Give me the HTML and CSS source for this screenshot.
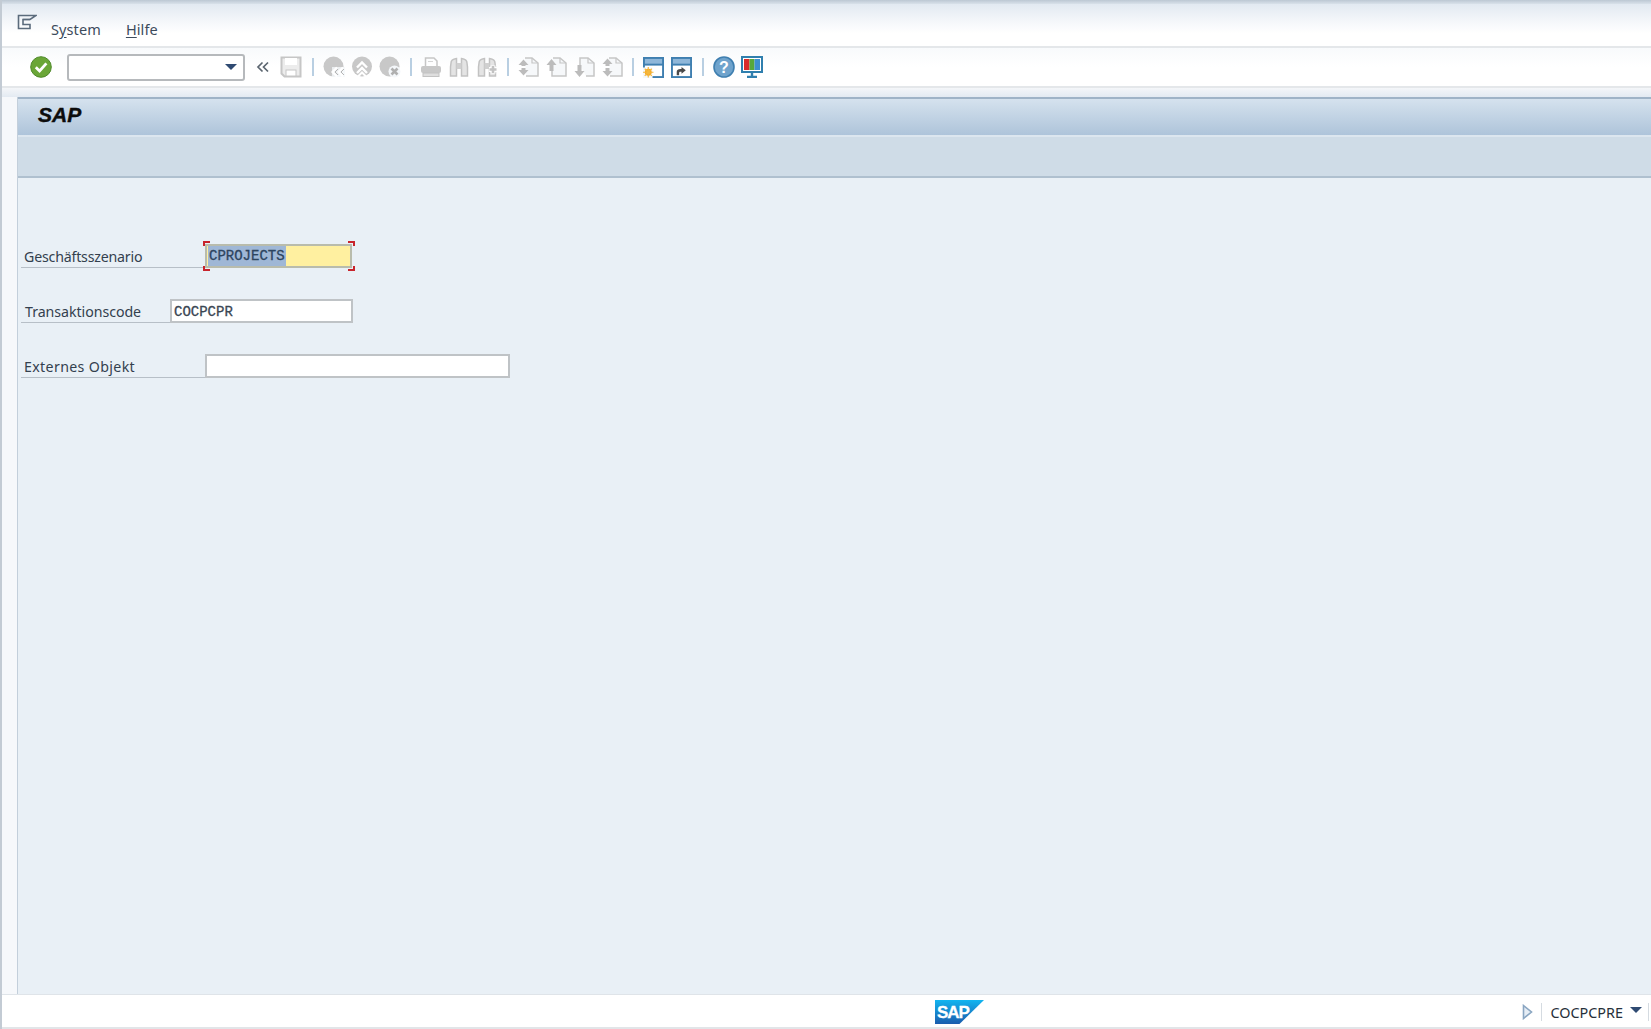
FILE: index.html
```html
<!DOCTYPE html>
<html lang="de">
<head>
<meta charset="utf-8">
<title>SAP</title>
<link rel="stylesheet" href="styles.css">
</head>
<body>
<div class="app">
  <div class="topline"></div>
  <header class="menubar">
    <svg class="menu-icon" viewBox="0 0 20 16" width="20" height="16"><path d="M1.5 1.5H19L13 5.5H6V10.5H13V14.5H1.5Z" fill="none" stroke="#5b6b7c" stroke-width="1.6"/><path d="M6 5.5H13" stroke="#5b6b7c" stroke-width="1.4"/></svg>
    <span class="menu-item">S<u>y</u>stem</span>
    <span class="menu-item"><u>H</u>ilfe</span>
  </header>
  <nav class="toolbar">
    <span class="slot">
      <svg viewBox="0 0 22 22" width="22" height="22"><circle cx="11" cy="11" r="10.3" fill="#6aa637"/><circle cx="11" cy="11" r="10.3" fill="none" stroke="#4f8a2a" stroke-width="1"/><path d="M5.8 11.2L9.6 15L16.4 7.4" fill="none" stroke="#fff" stroke-width="2.8"/></svg>
    </span>
    <div class="combo"><span class="combo-arrow"></span></div>
    <span class="slot">
      <svg viewBox="0 0 14 12" width="14" height="12"><path d="M6.5 1.5L2 6L6.5 10.5M12 1.5L7.5 6L12 10.5" fill="none" stroke="#5c6670" stroke-width="1.7"/></svg>
    </span>
    <span class="slot">
      <svg viewBox="0 0 22 22" width="22" height="22"><path d="M1.5 1.5H20.5V20.5H4.5L1.5 17.5Z" fill="#ececec" stroke="#c6c6c6" stroke-width="2"/><rect x="5" y="2" width="12" height="7" fill="#fff"/><rect x="6" y="14" width="10" height="6" fill="#fff" stroke="#c6c6c6"/></svg>
    </span>
    <span class="sep sep-first"></span>
    <span class="slot">
      <svg viewBox="0 0 22 22" width="22" height="22"><circle cx="10.5" cy="10.5" r="10" fill="#c8c8c8"/><rect x="9" y="11" width="13" height="10" fill="#f4f7fa" opacity=".8"/><path d="M14 11.5L9.5 16L14 20.5M20 11.5L15.5 16L20 20.5" fill="none" stroke="#fff" stroke-width="2.2"/><path d="M15 13L12 16L15 19M21 13L18 16L21 19" fill="none" stroke="#b5b5b5" stroke-width="1"/></svg>
    </span>
    <span class="slot">
      <svg viewBox="0 0 22 22" width="22" height="22"><circle cx="11" cy="10.5" r="10" fill="#c8c8c8"/><path d="M6 11.5L11 6.5L16 11.5M6 17L11 12L16 17" fill="none" stroke="#fff" stroke-width="2.4"/><path d="M7 20.5L11 16.5L15 20.5" fill="none" stroke="#fff" stroke-width="2"/></svg>
    </span>
    <span class="slot">
      <svg viewBox="0 0 22 22" width="22" height="22"><circle cx="10.5" cy="10.5" r="10" fill="#c8c8c8"/><circle cx="15.5" cy="15.5" r="6" fill="#f4f7fa"/><path d="M12.5 12.5L18.5 18.5M18.5 12.5L12.5 18.5" stroke="#b0b0b0" stroke-width="2.6"/></svg>
    </span>
    <span class="sep sep-tight"></span>
    <span class="slot">
      <svg viewBox="0 0 22 22" width="22" height="22"><path d="M5.5 10V2H14L17 5V10" fill="none" stroke="#c6c6c6" stroke-width="1.5"/><path d="M8 5.5H13" stroke="#d5d5d5"/><rect x="1" y="10" width="20" height="7" rx="2" fill="#c8c8c8"/><rect x="3" y="17" width="16" height="3.5" fill="#dedede" stroke="#c2c2c2"/></svg>
    </span>
    <span class="slot">
      <svg viewBox="0 0 22 22" width="22" height="22"><path d="M3 7C3 4 5 3 8.5 2.5V20H2.5V11ZM19 7C19 4 17 3 13.5 2.5V20H19.5V11Z" fill="#e4e4e4" stroke="#c2c2c2" stroke-width="1.5"/><rect x="8.5" y="7" width="5" height="6" fill="#d0d0d0"/></svg>
    </span>
    <span class="slot">
      <svg viewBox="0 0 22 22" width="22" height="22"><path d="M3 7C3 4 5 3 8.5 2.5V20H2.5V11ZM19 7C19 4 17 3 13.5 2.5V20H19.5V11Z" fill="#e4e4e4" stroke="#c2c2c2" stroke-width="1.5"/><rect x="8.5" y="7" width="5" height="6" fill="#d0d0d0"/><path d="M13 13.5H21M17 9.5V17.5" stroke="#fff" stroke-width="5"/><path d="M13.5 13.5H20.5M17 10V17" stroke="#c2c2c2" stroke-width="2.6"/></svg>
    </span>
    <span class="sep sep-tight"></span>
    <span class="slot">
      <svg viewBox="0 0 22 22" width="22" height="22"><path d="M8 2H15L21 7V20H9" fill="#f6f8fa" stroke="#c6c6c6" stroke-width="1.5"/><path d="M15 2V7H21" fill="none" stroke="#c6c6c6" stroke-width="1.2"/><path d="M1.5 9L6.5 3.5L11.5 9H8.5V10H4.5V9ZM1.5 14L6.5 19.5L11.5 14H8.5V12H4.5V14Z" fill="#bcbcbc"/></svg>
    </span>
    <span class="slot">
      <svg viewBox="0 0 22 22" width="22" height="22"><path d="M8 2H15L21 7V20H7V14" fill="#f6f8fa" stroke="#c6c6c6" stroke-width="1.5"/><path d="M15 2V7H21" fill="none" stroke="#c6c6c6" stroke-width="1.2"/><path d="M1.5 9L6.5 3L11.5 9H8.5V15H4.5V9Z" fill="#bcbcbc"/></svg>
    </span>
    <span class="slot">
      <svg viewBox="0 0 22 22" width="22" height="22"><path d="M7 9V2H15L21 7V20H13" fill="#f6f8fa" stroke="#c6c6c6" stroke-width="1.5"/><path d="M15 2V7H21" fill="none" stroke="#c6c6c6" stroke-width="1.2"/><path d="M1.5 15L6.5 21L11.5 15H8.5V9H4.5V15Z" fill="#bcbcbc"/></svg>
    </span>
    <span class="slot">
      <svg viewBox="0 0 22 22" width="22" height="22"><path d="M8 2H15L21 7V20H9" fill="#f6f8fa" stroke="#c6c6c6" stroke-width="1.5"/><path d="M15 2V7H21" fill="none" stroke="#c6c6c6" stroke-width="1.2"/><path d="M1.5 8L6.5 2.5L11.5 8H8.5V10H4.5V8ZM1.5 15L6.5 20.5L11.5 15H8.5V12H4.5V15Z" fill="#bcbcbc"/></svg>
    </span>
    <span class="sep sep-tight"></span>
    <span class="slot">
      <svg viewBox="0 0 22 22" width="21" height="21"><rect x="1" y="1" width="20" height="20" fill="#fff" stroke="#3f7fb0" stroke-width="2"/><rect x="1" y="1" width="20" height="7" fill="#8fb7d9" stroke="#3f7fb0" stroke-width="2"/><rect x="0" y="11" width="10" height="11" fill="#f4f8fb"/><circle cx="5.5" cy="16" r="3.6" fill="#f5a623"/><path d="M5.5 10.5V21.5M0 16H11M1.8 12.3L9.2 19.7M9.2 12.3L1.8 19.7" stroke="#f5b83d" stroke-width="1.2"/></svg>
    </span>
    <span class="slot">
      <svg viewBox="0 0 22 22" width="21" height="21"><rect x="1" y="1" width="20" height="20" fill="#fff" stroke="#3f7fb0" stroke-width="2"/><rect x="1" y="1" width="20" height="7" fill="#8fb7d9" stroke="#3f7fb0" stroke-width="2"/><path d="M6 19V15.5C6 13.5 7.5 12.5 10 12.5H11V10.5L15.5 14L11 17.5V15.5H10C9 15.5 8.5 16 8.5 17V19Z" fill="#4a4a4a"/></svg>
    </span>
    <span class="sep sep-first"></span>
    <span class="slot">
      <svg viewBox="0 0 22 22" width="22" height="22"><circle cx="11" cy="11" r="10" fill="#6fa3cc" stroke="#3f7fb0" stroke-width="1.6"/><text x="11" y="16.5" class="help-mark">?</text></svg>
    </span>
    <span class="slot">
      <svg viewBox="0 0 22 22" width="22" height="22"><rect x="1" y="1" width="20" height="15" fill="#fff" stroke="#2f7fae" stroke-width="2"/><rect x="3" y="3" width="5.5" height="11" fill="#d92b2b"/><rect x="8.5" y="3" width="5" height="11" fill="#57a83c"/><rect x="13.5" y="3" width="5.5" height="11" fill="#3d8fd1"/><path d="M11 16V20M6 21H16" stroke="#2f7fae" stroke-width="2.4"/></svg>
    </span>
  </nav>
  <div class="gap-band"></div>
  <main class="panel">
    <div class="title-bar"><h1 class="title">SAP</h1></div>
    <div class="app-toolbar"></div>
    <section class="form">
      <div class="row">
        <label class="label label-wide">Geschäftsszenario</label>
        <div class="focus-wrap">
          <div class="field field-focus"><span class="selected">CPROJECTS</span></div>
          <i class="corner corner-tl"></i><i class="corner corner-tr"></i><i class="corner corner-bl"></i><i class="corner corner-br"></i>
        </div>
      </div>
      <div class="row">
        <label class="label label-narrow">Transaktionscode</label>
        <div class="field field-code">COCPCPR</div>
      </div>
      <div class="row">
        <label class="label label-wide-full">Externes Objekt</label>
        <div class="field field-long"></div>
      </div>
    </section>
  </main>
  <footer class="statusbar">
    <div class="status-logo">
      <svg viewBox="0 0 49 24" width="49" height="24"><defs><linearGradient id="sapg" x1="0" y1="0" x2="0" y2="1"><stop offset="0" stop-color="#12b5f0"/><stop offset="1" stop-color="#1a5cad"/></linearGradient></defs><path d="M0 0H49L24.5 24H0Z" fill="url(#sapg)"/><text x="2" y="18" class="logo-mark">SAP</text></svg>
    </div>
    <div class="status-right">
      <svg viewBox="0 0 11 16" width="11" height="16"><path d="M1.5 1.5L9.5 8L1.5 14.5Z" fill="#e5edf5" stroke="#8aa6c2" stroke-width="1.6"/></svg>
      <span class="status-sep"></span>
      <span class="status-text">COCPCPRE</span>
      <span class="status-arrow"></span>
      <span class="status-sep status-sep-end"></span>
    </div>
  </footer>
</div>
</body>
</html>
```
FILE: styles.css
```css
* { box-sizing: border-box; }
html, body { margin: 0; padding: 0; height: 100%; overflow: hidden; }
body { background: #fff; font-family: "Noto Sans", "Open Sans", sans-serif; color: #2c3a48; }
.app { width: 1651px; height: 1029px; display: flex; flex-direction: column; border-left: 2px solid #c3cbd4; background: #f6f8fb; }

.topline { height: 4px; background: linear-gradient(#bcc7d3, #d9e1ea); flex: none; }

.menubar { flex: none; height: 44px; display: flex; align-items: center; padding-left: 15px; background: linear-gradient(#e2e9f1, #f6f8fb 45%, #fff 70%); border-bottom: 2px solid #e4e7ea; }
.menu-icon { margin-top: -7px; flex: none; }
.menu-item { font-size: 14.5px; color: #3d4b5c; margin-top: 8px; letter-spacing: .1px; }
.menu-icon + .menu-item { margin-left: 14px; margin-right: 25px; }
.menu-item u { text-underline-offset: 2px; }

.toolbar { flex: none; height: 40px; display: flex; align-items: center; padding-left: 25px; background: linear-gradient(#f8fafc, #fff 50%); border-bottom: 2px solid #e4e7ea; }
.slot { flex: none; width: 28px; height: 28px; display: flex; align-items: center; justify-content: center; }
.sep { flex: none; width: 14px; height: 18px; display: flex; justify-content: center; }
.sep-first { width: 15px; }
.sep-tight { width: 13px; }
.sep::before { content: ""; width: 2px; height: 18px; background: #b9cfe2; }
.combo { flex: none; width: 178px; height: 27px; margin: 0 4px 0 12px; background: #fff; border: 2px solid #b6b9bc; border-radius: 3px; display: flex; align-items: center; justify-content: flex-end; padding-right: 6px; }
.combo-arrow { width: 0; height: 0; border-left: 6px solid transparent; border-right: 6px solid transparent; border-top: 6px solid #2f4a72; }
.help-mark { font: bold 16px "Liberation Sans", sans-serif; fill: #fff; text-anchor: middle; }

.gap-band { flex: none; height: 9px; background: linear-gradient(#f4f6f9, #e3eaf2); }

.panel { flex: 1; min-height: 0; margin-left: 15px; display: flex; flex-direction: column; background: #e9f0f6; border-left: 1px solid #c3cfdb; }
.title-bar { flex: none; height: 40px; display: flex; align-items: center; padding: 0 0 4px 20px; background: linear-gradient(#d5e2ee, #aec4da); border-top: 2px solid #9fb3c7; border-bottom: 2px solid #dce6ef; }
.title { margin: 0; font: italic bold 21px "Liberation Sans", Arial, sans-serif; color: #0c0c0c; -webkit-text-stroke: .4px #0c0c0c; }
.app-toolbar { flex: none; height: 41px; background: #cfdce7; border-bottom: 2px solid #afc0cf; }

.form { flex: 1; padding: 66px 0 0 3px; display: flex; flex-direction: column; gap: 31px; }
.row { display: flex; height: 24px; }
.label { display: block; height: 24px; font-size: 14.2px; line-height: 26px; padding-left: 3px; color: #33404e; border-bottom: 1px solid #b7bfc7; white-space: nowrap; }
.label-wide { width: 184px; letter-spacing: -.2px; }
.label-narrow { width: 149px; padding-left: 4px; letter-spacing: -.05px; }
.label-wide-full { width: 184px; letter-spacing: .35px; }

.field { height: 24px; background: #fff; border: 2px solid #bfc3c6; font: 14px/20px "Liberation Mono", "Courier New", monospace; color: #3a4653; padding: 1px 0 0 2px; white-space: nowrap; -webkit-text-stroke: .3px #3a4653; }
.focus-wrap { position: relative; width: 147px; height: 24px; }
.field-focus { width: 147px; background: #fff0a0; border-color: #b9bcac; color: #2d4460; -webkit-text-stroke-color: #2d4460; padding: 0 0 0 1px; }
.selected { display: inline-block; height: 20px; background: #9fb7d6; padding: 0 1px; line-height: 21px; }
.field-code { width: 183px; }
.field-long { width: 305px; }

.corner { position: absolute; width: 7px; height: 5px; border: 0 solid #c8242c; }
.corner-tl { left: -2px; top: -3px; border-width: 2px 0 0 2px; }
.corner-tr { right: -3px; top: -3px; border-width: 2px 2px 0 0; }
.corner-bl { left: -2px; bottom: -3px; border-width: 0 0 2px 2px; }
.corner-br { right: -3px; bottom: -3px; border-width: 0 2px 2px 0; }

.statusbar { flex: none; height: 35px; display: flex; align-items: center; position: relative; background: #fff; border-top: 1px solid #dfe4e9; border-bottom: 2px solid #e2e5e8; }
.status-logo { position: absolute; left: 933px; top: 5px; line-height: 0; }
.logo-mark { font: bold 17px "Liberation Sans", Arial, sans-serif; fill: #fff; letter-spacing: -1px; stroke: #fff; stroke-width: .3px; }
.status-right { margin-left: auto; display: flex; align-items: center; padding-top: 2px; }
.status-sep { width: 1px; height: 18px; background: #d5dbe1; margin: 0 8px; }
.status-sep-end { margin: 0 2px 0 6px; }
.status-text { font-size: 14.4px; color: #26303a; }
.status-arrow { width: 0; height: 0; margin: -4px 0 0 7px; border-left: 6px solid transparent; border-right: 6px solid transparent; border-top: 6px solid #2f4a72; }
```
